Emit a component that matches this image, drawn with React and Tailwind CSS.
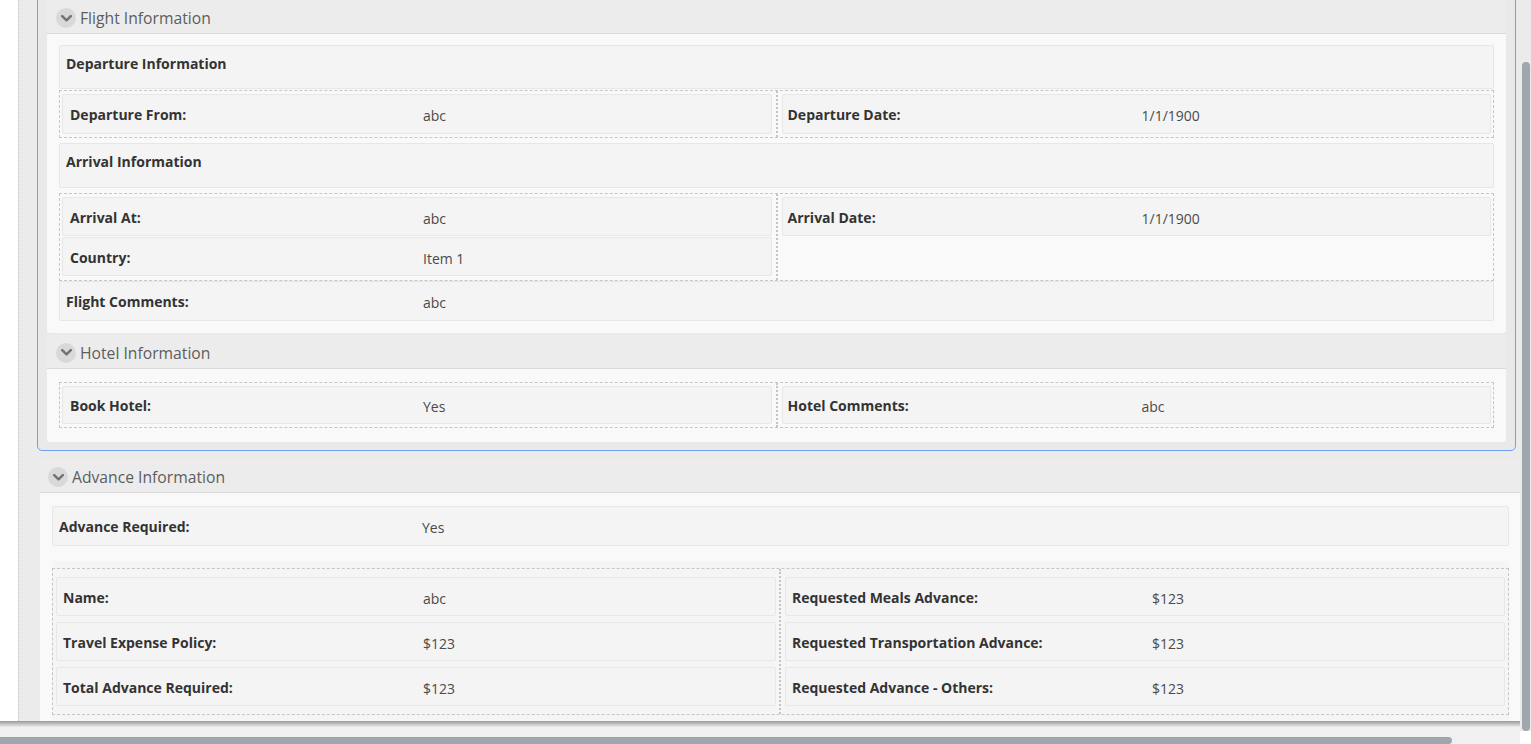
import React from "react";

function Chevron() {
  return (
    <span className="w-[20px] h-[20px] rounded-full bg-[#d9d9d9] flex items-center justify-center shrink-0">
      <svg width="11" height="7" viewBox="0 0 11 7">
        <path d="M1.2 1.2 L5.5 5.3 L9.8 1.2" fill="none" stroke="#737373" strokeWidth="2.5" strokeLinecap="round" strokeLinejoin="round" />
      </svg>
    </span>
  );
}

function Header({ title, className = "" }) {
  return (
    <div className={`flex items-center gap-[4px] bg-[#ececec] border-b border-[#dadada] ${className}`}>
      <Chevron />
      <span className="text-[15.7px] leading-[20px] text-[#5d5d5d]">{title}</span>
    </div>
  );
}

function Field({ label, value, lw, h = "h-[40px]", pl = "pl-[7px]" }) {
  return (
    <div className={`flex items-center ${h} ${pl} bg-[#f4f4f4] border border-[#e7e7e7] rounded-[2px]`}>
      <div className={`${lw} shrink-0 pt-[1px] text-[14px] font-bold text-[#333]`}>{label}</div>
      <div className="text-[14px] text-[#4a4a4a] pt-[3px]">{value}</div>
    </div>
  );
}

function Divider() {
  return <div className="self-stretch border-l-2 border-dotted border-[#c4c4c4]" />;
}

function SectionTitle({ title, h }) {
  return (
    <div className={`${h} pl-[6px] pt-[9px] bg-[#f4f4f4] border border-[#e7e7e7] rounded-[2px] text-[14px] leading-[18px] font-bold text-[#333]`}>
      {title}
    </div>
  );
}

export default function App() {
  return (
    <div className="w-[1531px] h-[744px] overflow-hidden flex bg-white font-['Open_Sans',sans-serif]">
      <div className="w-[1520px] flex flex-col shrink-0">
        <div className="h-[721px] flex overflow-hidden shrink-0">
          <div className="w-[18px] bg-white shrink-0" />
          <div className="flex-1 border-l border-dotted border-[#c4c4c4] bg-[#ebebeb] overflow-hidden">
            {/* Blue panel */}
            <div className="ml-[18px] w-[1479px] mt-[-10px] border border-solid border-[#6f9ff0] rounded-b-[5px] bg-[#e9e9e9] px-[9px] pt-[9px] pb-[8px]">
              <Header title="Flight Information" className="h-[34px] pl-[9px] pt-[3px]" />
              <div className="bg-[#f9f9f9] rounded-b-[3px] pt-[11px] px-[12px] pb-[12px] flex flex-col">
                <SectionTitle title="Departure Information" h="h-[44px]" />
                <div className="mt-[1px] flex border border-dashed border-[#c6c6c6]">
                  <div className="flex-1 py-[3px] pl-[2px] pr-[4px]">
                    <Field label="Departure From:" value="abc" lw="w-[353px]" />
                  </div>
                  <Divider />
                  <div className="flex-1 py-[3px] pl-[4px] pr-[2px]">
                    <Field label="Departure Date:" value="1/1/1900" lw="w-[354px]" pl="pl-[5px]" />
                  </div>
                </div>
                <div className="mt-[5px]">
                  <SectionTitle title="Arrival Information" h="h-[45px]" />
                </div>
                <div className="mt-[5px] flex border border-dashed border-[#c6c6c6]">
                  <div className="flex-1 pt-[3px] pb-[4px] pl-[2px] pr-[4px] flex flex-col gap-[1px]">
                    <Field label="Arrival At:" value="abc" lw="w-[353px]" h="h-[39px]" />
                    <Field label="Country:" value="Item 1" lw="w-[353px]" h="h-[39px]" />
                  </div>
                  <Divider />
                  <div className="flex-1 py-[3px] pl-[4px] pr-[2px]">
                    <Field label="Arrival Date:" value="1/1/1900" lw="w-[354px]" h="h-[39px]" pl="pl-[5px]" />
                  </div>
                </div>
                <Field label="Flight Comments:" value="abc" lw="w-[357px]" pl="pl-[6px]" />
              </div>

              <Header title="Hotel Information" className="mt-[2px] h-[34px] pl-[9px] pt-[2px]" />
              <div className="bg-[#f9f9f9] rounded-b-[3px] pt-[13px] px-[12px] pb-[14px]">
                <div className="flex border border-dashed border-[#c6c6c6]">
                  <div className="flex-1 py-[3px] pl-[2px] pr-[4px]">
                    <Field label="Book Hotel:" value="Yes" lw="w-[353px]" h="h-[38px]" />
                  </div>
                  <Divider />
                  <div className="flex-1 py-[3px] pl-[4px] pr-[2px]">
                    <Field label="Hotel Comments:" value="abc" lw="w-[354px]" h="h-[38px]" pl="pl-[5px]" />
                  </div>
                </div>
              </div>
            </div>

            {/* Advance */}
            <div className="ml-[21px] w-[1480px] mt-[9px]">
              <Header title="Advance Information" className="h-[33px] pl-[8px] pt-[2px]" />
              <div className="bg-[#f9f9f9] pt-[13px] pl-[12px] pr-[11px] h-[300px]">
                <Field label="Advance Required:" value="Yes" lw="w-[363px]" h="h-[40px]" pl="pl-[6px]" />
                <div className="mt-[15px] bg-[#f5f5f5] pt-[7px] h-[200px]">
                  <div className="flex border border-dashed border-[#c6c6c6]">
                    <div className="flex-1 py-[8px] pl-[3px] pr-[3px] flex flex-col gap-[6px]">
                      <Field label="Name:" value="abc" lw="w-[360px]" h="h-[39px]" pl="pl-[6px]" />
                      <Field label="Travel Expense Policy:" value="$123" lw="w-[360px]" h="h-[39px]" pl="pl-[6px]" />
                      <Field label="Total Advance Required:" value="$123" lw="w-[360px]" h="h-[39px]" pl="pl-[6px]" />
                    </div>
                    <Divider />
                    <div className="flex-1 py-[8px] pl-[4px] pr-[3px] flex flex-col gap-[6px]">
                      <Field label="Requested Meals Advance:" value="$123" lw="w-[360px]" h="h-[39px]" pl="pl-[6px]" />
                      <Field label="Requested Transportation Advance:" value="$123" lw="w-[360px]" h="h-[39px]" pl="pl-[6px]" />
                      <Field label="Requested Advance - Others:" value="$123" lw="w-[360px]" h="h-[39px]" pl="pl-[6px]" />
                    </div>
                  </div>
                </div>
              </div>
            </div>
          </div>
        </div>
        <div className="h-[6px] shrink-0 bg-linear-to-b from-[#9a9a9a] to-[#ececec]" />
        <div className="h-[10px] shrink-0 bg-[#f0f0f0]" />
        <div className="h-[7px] shrink-0 bg-[#f0f0f0]">
          <div className="w-[1452px] h-full bg-[#a0a6ad] rounded-r-[4px]" />
        </div>
      </div>
      <div className="w-[11px] shrink-0 bg-[#ebebeb] flex flex-col">
        <div className="h-[62px] shrink-0" />
        <div className="ml-[2px] w-[8px] h-[669px] shrink-0 rounded-[4px] bg-[#a0a6ad]" />
        <div className="flex-1 bg-white" />
      </div>
    </div>
  );
}
